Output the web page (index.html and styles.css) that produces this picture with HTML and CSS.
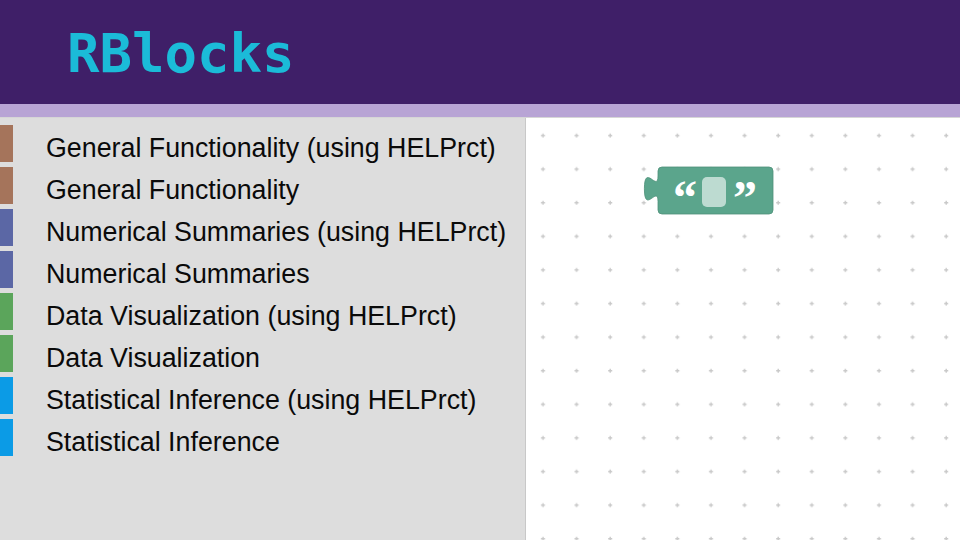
FILE: index.html
```html
<!DOCTYPE html>
<html lang="en">
<head>
<meta charset="utf-8">
<title>RBlocks</title>
<link rel="stylesheet" href="styles.css">
</head>
<body>
<header class="topbar">
  <h1 class="brand">RBlocks</h1>
</header>
<div class="accent"></div>
<main class="app">
  <nav class="toolbox">
    <ul class="cats">
      <li class="cat"><span class="swatch sw-general"></span><span class="label">General Functionality (using HELPrct)</span></li>
      <li class="cat"><span class="swatch sw-general"></span><span class="label">General Functionality</span></li>
      <li class="cat"><span class="swatch sw-numeric"></span><span class="label">Numerical Summaries (using HELPrct)</span></li>
      <li class="cat"><span class="swatch sw-numeric"></span><span class="label">Numerical Summaries</span></li>
      <li class="cat"><span class="swatch sw-visual"></span><span class="label">Data Visualization (using HELPrct)</span></li>
      <li class="cat"><span class="swatch sw-visual"></span><span class="label">Data Visualization</span></li>
      <li class="cat"><span class="swatch sw-infer"></span><span class="label">Statistical Inference (using HELPrct)</span></li>
      <li class="cat"><span class="swatch sw-infer"></span><span class="label">Statistical Inference</span></li>
    </ul>
  </nav>
  <section class="workspace">
    <svg class="grid" width="100%" height="100%" xmlns="http://www.w3.org/2000/svg">
      <defs>
        <pattern id="dots" width="33.6" height="33.6" patternUnits="userSpaceOnUse">
          <path d="M15 17.5h4M17 15.5v4" stroke="#c9c9c9" stroke-width="1.4"/>
        </pattern>
      </defs>
      <rect width="100%" height="100%" fill="url(#dots)"/>
    </svg>
    <svg class="block" width="140" height="64" viewBox="0 0 140 64" xmlns="http://www.w3.org/2000/svg">
      <path d="M20 1a4 4 0 0 0 -4 4V10c0 17 -13.6 -13.6 -13.6 12.75s13.6 -4.25 13.6 12.75V44a4 4 0 0 0 4 4H127a4 4 0 0 0 4 -4V5a4 4 0 0 0 -4 -4Z" fill="#5ba58c" stroke="#4e9079" stroke-width="0.8"/>
      <rect x="60" y="11" width="24" height="30" rx="5" fill="#bddbd1"/>
      <text class="quote" x="31" y="47.5">“</text>
      <text class="quote" x="91" y="47.5">”</text>
    </svg>
  </section>
</main>
</body>
</html>
```
FILE: styles.css
```css
html, body {
  margin: 0;
  padding: 0;
}
body {
  width: 960px;
  height: 540px;
  overflow: hidden;
  font-family: "Liberation Sans", Arial, sans-serif;
  background: #ffffff;
}
.topbar {
  height: 104px;
  background: #3f1f68;
  box-sizing: border-box;
  padding: 4px 0 0 67px;
}
.brand {
  margin: 0;
  font-family: "DejaVu Sans Mono", monospace;
  font-weight: bold;
  font-size: 54px;
  line-height: 100px;
  color: #1bbbd8;
}
.accent {
  height: 13px;
  background: #b8a4d5;
  border-bottom: 1px solid #d6d6d6;
}
.app {
  display: flex;
  height: 422px;
}
.toolbox {
  width: 525px;
  flex: none;
  background: #dddddd;
  border-right: 1px solid #c8c8c8;
  padding-top: 7px;
  box-sizing: content-box;
}
.cats {
  list-style: none;
  margin: 0;
  padding: 0;
  display: flex;
  flex-direction: column;
  gap: 5px;
}
.cat {
  display: flex;
  height: 37px;
}
.swatch {
  width: 13px;
  height: 37px;
  flex: none;
}
.sw-general { background: #a5745b; }
.sw-numeric { background: #5b67a5; }
.sw-visual { background: #5ba55b; }
.sw-infer { background: #0b9be6; }
.label {
  margin-left: 33px;
  padding-top: 9px;
  font-size: 26.8px;
  line-height: 28px;
  color: #0a0a0a;
  white-space: nowrap;
}
.workspace {
  position: relative;
  flex: 1;
  background: #ffffff;
  overflow: hidden;
}
.grid {
  position: absolute;
  inset: 0;
}
.block {
  position: absolute;
  left: 116px;
  top: 48px;
}
.quote {
  font-family: "Liberation Serif", serif;
  font-weight: bold;
  font-size: 48px;
  fill: #ffffff;
}
```
